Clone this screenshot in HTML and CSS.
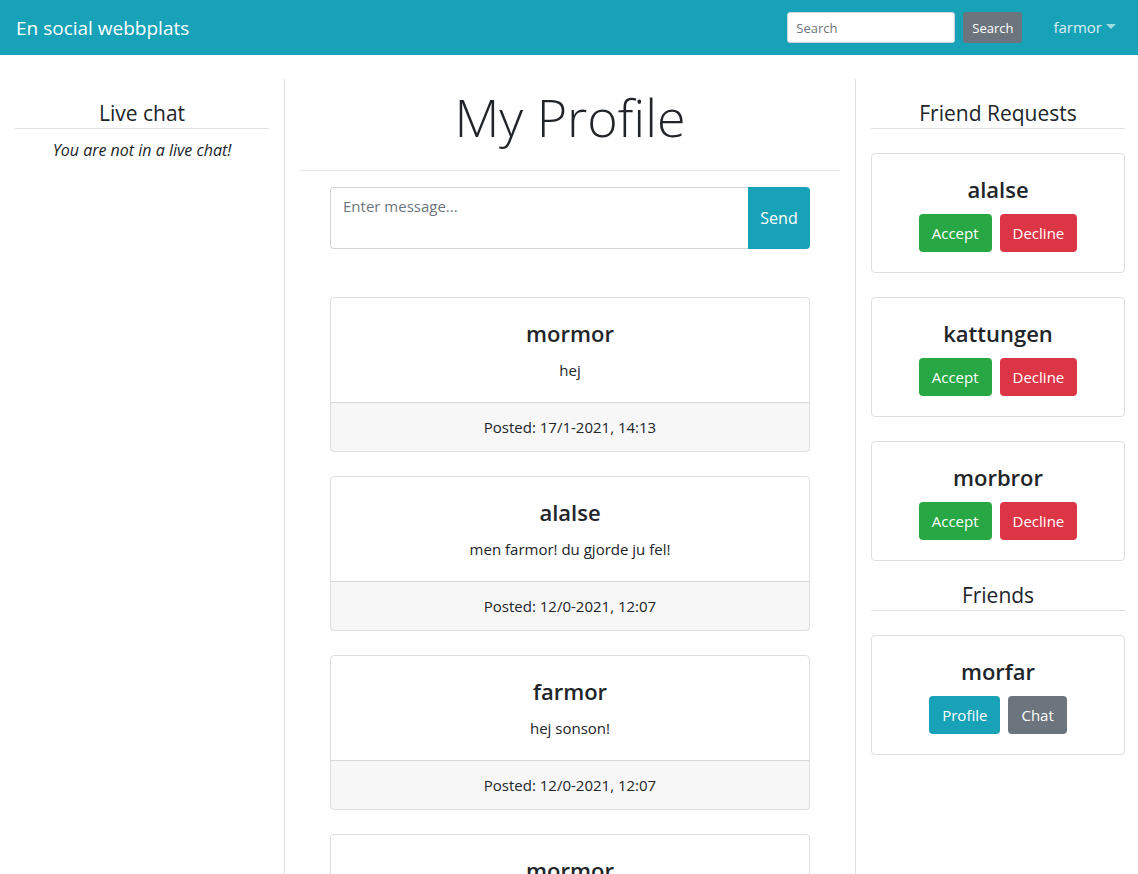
FILE: index.html
```html
<!DOCTYPE html>
<html lang="sv">
<head>
<meta charset="utf-8">
<title>En social webbplats</title>
<link rel="stylesheet" href="styles.css">
</head>
<body>
<nav class="navbar">
  <a class="brand" href="#">En social webbplats</a>
  <div class="nav-right">
    <form class="search-form">
      <input class="search-input" type="text" placeholder="Search">
      <button class="btn-sm btn-secondary" type="button">Search</button>
    </form>
    <a class="nav-user" href="#">farmor<span class="caret"></span></a>
  </div>
</nav>

<div class="layout">
  <aside class="col col-left">
    <h4 class="section-title">Live chat</h4>
    <p class="no-chat">You are not in a live chat!</p>
  </aside>

  <main class="col col-main">
    <h1 class="page-title">My Profile</h1>
    <hr class="divider">
    <div class="feed">
      <form class="message-form">
        <textarea class="message-input" placeholder="Enter message..."></textarea>
        <button class="btn btn-info send-btn" type="button">Send</button>
      </form>

      <div class="post">
        <div class="post-body">
          <h4 class="post-author">mormor</h4>
          <p class="post-text">hej</p>
        </div>
        <div class="post-footer">Posted: 17/1-2021, 14:13</div>
      </div>

      <div class="post">
        <div class="post-body">
          <h4 class="post-author">alalse</h4>
          <p class="post-text">men farmor! du gjorde ju fel!</p>
        </div>
        <div class="post-footer">Posted: 12/0-2021, 12:07</div>
      </div>

      <div class="post">
        <div class="post-body">
          <h4 class="post-author">farmor</h4>
          <p class="post-text">hej sonson!</p>
        </div>
        <div class="post-footer">Posted: 12/0-2021, 12:07</div>
      </div>

      <div class="post">
        <div class="post-body">
          <h4 class="post-author">mormor</h4>
          <p class="post-text">hej</p>
        </div>
        <div class="post-footer">Posted: 12/0-2021, 12:07</div>
      </div>
    </div>
  </main>

  <aside class="col col-right">
    <h4 class="section-title">Friend Requests</h4>
    <div class="user-card">
      <h4 class="user-name">alalse</h4>
      <div class="user-actions">
        <button class="btn btn-success" type="button">Accept</button>
        <button class="btn btn-danger" type="button">Decline</button>
      </div>
    </div>
    <div class="user-card">
      <h4 class="user-name">kattungen</h4>
      <div class="user-actions">
        <button class="btn btn-success" type="button">Accept</button>
        <button class="btn btn-danger" type="button">Decline</button>
      </div>
    </div>
    <div class="user-card">
      <h4 class="user-name">morbror</h4>
      <div class="user-actions">
        <button class="btn btn-success" type="button">Accept</button>
        <button class="btn btn-danger" type="button">Decline</button>
      </div>
    </div>

    <h4 class="section-title section-title-sub">Friends</h4>
    <div class="user-card">
      <h4 class="user-name">morfar</h4>
      <div class="user-actions">
        <button class="btn btn-info" type="button">Profile</button>
        <button class="btn btn-secondary" type="button">Chat</button>
      </div>
    </div>
  </aside>
</div>
</body>
</html>
```

FILE: styles.css
```css
* { box-sizing: border-box; }

html, body {
  margin: 0;
  padding: 0;
}

body {
  font-family: "Open Sans", "Noto Sans", "Liberation Sans", sans-serif;
  font-size: 15px;
  line-height: 1.5;
  color: #212529;
  background: #fff;
}

/* ---------- buttons ---------- */
.btn {
  height: 38px;
  padding: 0 13px;
  border: 0;
  border-radius: 4px;
  font-family: inherit;
  font-size: 15px;
  color: #fff;
  line-height: 38px;
}

.btn-success { background: #28a745; }
.btn-danger { background: #dc3545; }
.btn-info { background: #17a2b8; }
.btn-secondary { background: #6c757d; }

/* ---------- navbar ---------- */
.navbar {
  height: 55px;
  background: #17a2b8;
  display: flex;
  align-items: center;
  justify-content: space-between;
  padding: 0 16px;
}

.brand {
  color: #fff;
  text-decoration: none;
  font-size: 19px;
  line-height: 30px;
}

.nav-right {
  display: flex;
  align-items: center;
}

.search-form {
  display: flex;
  align-items: center;
  gap: 8px;
}

.search-input {
  width: 168px;
  height: 31px;
  border: 1px solid #ced4da;
  border-radius: 3px;
  padding: 4px 8px;
  font-family: inherit;
  font-size: 13px;
  color: #495057;
}

.search-input::placeholder { color: #6c757d; }

.btn-sm {
  height: 31px;
  padding: 0 9px;
  border: 0;
  border-radius: 3px;
  font-family: inherit;
  font-size: 13px;
  color: #fff;
}

.nav-user {
  margin-left: 23px;
  padding: 8px 6px 8px 8px;
  color: rgba(255, 255, 255, 0.85);
  text-decoration: none;
  font-size: 15px;
  display: flex;
  align-items: center;
}

.caret {
  display: inline-block;
  margin-left: 4px;
  border-top: 5px solid rgba(255, 255, 255, 0.6);
  border-left: 5px solid transparent;
  border-right: 5px solid transparent;
  margin-top: -2px;
}

/* ---------- layout ---------- */
.layout {
  margin-top: 24px;
  display: grid;
  grid-template-columns: 285px 571px 1fr;
  min-height: 820px;
}

.col {
  padding: 0 15px;
}

.col-right {
  padding-right: 13px;
}

.col-left,
.col-main {
  border-right: 1px solid #dee2e6;
}

.section-title {
  margin: 20px 0 0;
  font-size: 21px;
  font-weight: 400;
  line-height: 29px;
  text-align: center;
  border-bottom: 1px solid #dee2e6;
}

.no-chat {
  margin: 9px 0 0;
  font-style: italic;
  font-size: 16px;
  text-align: center;
  line-height: 24px;
}

/* ---------- main ---------- */
.page-title {
  margin: 4px 0 0;
  font-size: 52px;
  font-weight: 300;
  line-height: 67px;
  text-align: center;
}

.divider {
  margin: 20px 0 0;
  border: 0;
  border-top: 1px solid rgba(0, 0, 0, 0.1);
}

.feed {
  width: 480px;
  margin: 16px auto 0;
  display: flex;
  flex-direction: column;
}

.message-form {
  display: flex;
  height: 62px;
  margin-bottom: 48px;
}

.message-input {
  flex: 1;
  resize: none;
  border: 1px solid #ced4da;
  border-right: 0;
  border-radius: 4px 0 0 4px;
  padding: 6px 12px;
  font-family: inherit;
  font-size: 15px;
  line-height: 24px;
  color: #495057;
}

.message-input::placeholder { color: #6c757d; }

.message-form .send-btn {
  width: 62px;
  height: 62px;
  line-height: 62px;
  padding: 0;
  font-size: 16px;
  border-radius: 0 4px 4px 0;
}

.post {
  border: 1px solid rgba(0, 0, 0, 0.125);
  border-radius: 4px;
  margin-bottom: 24px;
  text-align: center;
}

.post-body {
  padding: 20px;
}

.post-author,
.user-name {
  margin: 0 0 10px;
  font-size: 22px;
  font-weight: 600;
  line-height: 30px;
}

.post-text {
  margin: 0;
  line-height: 24px;
}

.post-footer {
  background: rgba(0, 0, 0, 0.03);
  border-top: 1px solid rgba(0, 0, 0, 0.125);
  padding: 12px 20px;
  line-height: 24px;
}

/* ---------- right column ---------- */
.user-card {
  margin-top: 24px;
  border: 1px solid rgba(0, 0, 0, 0.125);
  border-radius: 4px;
  padding: 20px;
  text-align: center;
  height: 120px;
}

.user-actions {
  display: flex;
  justify-content: center;
  gap: 8px;
}

.section-title-sub {
  margin-top: 20px;
}
```
